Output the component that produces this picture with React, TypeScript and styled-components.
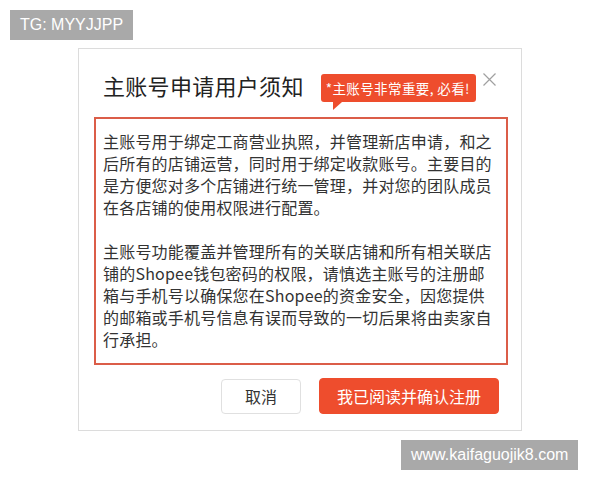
import styled, { createGlobalStyle } from "styled-components";

const GlobalStyle = createGlobalStyle`
  html, body {
    margin: 0;
    padding: 0;
    background: #fff;
  }
  body {
    font-family: "Noto Sans CJK SC", "Liberation Sans", sans-serif;
  }
`;

const Page = styled.div`
  position: relative;
  width: 600px;
  height: 480px;
  padding: 48px 0 0 78px;
  box-sizing: border-box;
`;

const Stamp = styled.div<{ $top: number; $left: number }>`
  position: absolute;
  top: ${(p) => p.$top}px;
  left: ${(p) => p.$left}px;
  height: 30px;
  padding: 0 10px;
  display: flex;
  align-items: center;
  background: #a9a9a9;
  color: #fff;
  font-family: "Liberation Sans", Arial, sans-serif;
  font-size: 16px;
`;

const Dialog = styled.div`
  position: relative;
  width: 444px;
  box-sizing: border-box;
  border: 1px solid #dcdcdc;
  background: #fff;
  padding: 21px 13px 16px 15px;
`;

const Header = styled.div`
  display: flex;
  align-items: flex-start;
  padding-left: 9px;
  height: 47px;
`;

const Title = styled.h2`
  margin: 0;
  font-size: 22px;
  font-weight: 400;
  line-height: 30px;
  color: #222;
  letter-spacing: 0.3px;
`;

const Bubble = styled.div`
  position: relative;
  margin: 4px 0 0 17px;
  height: 28px;
  padding: 0 6px 0 5px;
  display: flex;
  align-items: center;
  background: #ee4d2d;
  border-radius: 3px;
  color: #fff;
  font-size: 13.5px;
  letter-spacing: 0.4px;
  white-space: nowrap;

  &::after {
    content: "";
    position: absolute;
    left: 12px;
    top: 28px;
    border-left: 0 solid transparent;
    border-right: 9px solid transparent;
    border-top: 8px solid #ee4d2d;
  }
`;

const Close = styled.button`
  position: absolute;
  top: 23px;
  right: 24px;
  width: 15px;
  height: 15px;
  padding: 0;
  border: none;
  background: none;
  cursor: pointer;
  display: flex;
`;

const Notice = styled.div`
  border: 2px solid #db5d48;
  padding: 11px 8px 13px 7px;
  display: flex;
  flex-direction: column;
  gap: 22px;
`;

const Para = styled.p`
  margin: 0;
  font-size: 16px;
  line-height: 22px;
  letter-spacing: 0.2px;
  color: #333;
  white-space: pre-line;
`;

const Footer = styled.div`
  display: flex;
  justify-content: flex-end;
  align-items: center;
  gap: 18px;
  margin-top: 13px;
  padding-right: 9px;
`;

const Button = styled.button<{ $primary?: boolean }>`
  height: ${(p) => (p.$primary ? 36 : 35)}px;
  width: ${(p) => (p.$primary ? 180 : 80)}px;
  border-radius: 4px;
  border: 1px solid ${(p) => (p.$primary ? "#ee4d2d" : "#e0e0e0")};
  background: ${(p) => (p.$primary ? "#ee4d2d" : "#fff")};
  color: ${(p) => (p.$primary ? "#fff" : "#333")};
  font-family: "Noto Sans CJK SC", sans-serif;
  font-size: 16px;
  cursor: pointer;
`;

const para1 =
  "主账号用于绑定工商营业执照，并管理新店申请，和之\n后所有的店铺运营，同时用于绑定收款账号。主要目的\n是方便您对多个店铺进行统一管理，并对您的团队成员\n在各店铺的使用权限进行配置。";

const para2 =
  "主账号功能覆盖并管理所有的关联店铺和所有相关联店\n铺的Shopee钱包密码的权限，请慎选主账号的注册邮\n箱与手机号以确保您在Shopee的资金安全，因您提供\n的邮箱或手机号信息有误而导致的一切后果将由卖家自\n行承担。";

export default function App() {
  return (
    <>
      <GlobalStyle />
      <Page>
        <Dialog>
          <Header>
            <Title>主账号申请用户须知</Title>
            <Bubble>*主账号非常重要, 必看!</Bubble>
          </Header>
          <Close aria-label="关闭">
            <svg width="15" height="15" viewBox="0 0 15 15">
              <path d="M1.5 1.5 L13.5 13.5 M13.5 1.5 L1.5 13.5" stroke="#a0a0a0" strokeWidth="1.2" fill="none" />
            </svg>
          </Close>
          <Notice>
            <Para>{para1}</Para>
            <Para>{para2}</Para>
          </Notice>
          <Footer>
            <Button>取消</Button>
            <Button $primary>我已阅读并确认注册</Button>
          </Footer>
        </Dialog>
        <Stamp $top={10} $left={10}>TG: MYYJJPP</Stamp>
        <Stamp $top={440} $left={401}>www.kaifaguojik8.com</Stamp>
      </Page>
    </>
  );
}
